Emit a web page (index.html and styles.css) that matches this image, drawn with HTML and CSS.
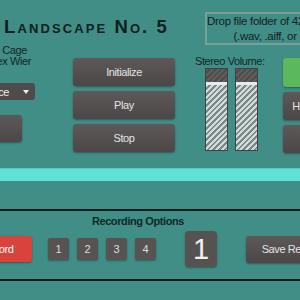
FILE: index.html
```html
<!DOCTYPE html>
<html lang="en">
<head>
    <meta charset="UTF-8">
    <meta name="viewport" content="width=device-width, initial-scale=1.0">
    <title>Imaginary Landscape No. 5</title>
    <link rel="stylesheet" href="styles.css">
</head>
<body>
    <div class="page">
        <div class="header">
            <div class="title-wrap">
                <h1 class="title"><span class="title-first">Imaginary</span> Landscape No. 5</h1>
            </div>
            <div class="drop-zone">
                Drop file folder of 42 records here<br>
                (.wav, .aiff, or .mp3)
            </div>
        </div>

        <div class="main">
            <div class="left-col">
                <div class="credits">
                    <div class="credit-cage">John Cage</div>
                    <div>realized by Alex Wier</div>
                </div>
                <div class="dropdown">
                    <span>Choose Sequence</span>
                    <span class="caret"></span>
                </div>
                <button class="btn btn-shuffle">Shuffle</button>
            </div>

            <div class="transport">
                <button class="btn">Initialize</button>
                <button class="btn">Play</button>
                <button class="btn">Stop</button>
            </div>

            <div class="volume">
                <div class="volume-label">Stereo Volume:</div>
                <div class="meters">
                    <div class="meter"><div class="meter-top"></div><div class="meter-mark"></div><div class="meter-fill"></div></div>
                    <div class="meter"><div class="meter-top"></div><div class="meter-mark"></div><div class="meter-fill"></div></div>
                </div>
            </div>

            <div class="side">
                <button class="btn btn-go">Go</button>
                <button class="btn">Hide Controls</button>
                <button class="btn">Reset</button>
            </div>
        </div>

        <div class="progress-bar"></div>

        <div class="recording">
            <div class="recording-title">Recording Options</div>
            <div class="recording-row">
                <button class="btn btn-record">Record</button>
                <div class="takes">
                    <button class="take">1</button>
                    <button class="take">2</button>
                    <button class="take">3</button>
                    <button class="take">4</button>
                </div>
                <div class="take-display">1</div>
                <button class="btn btn-save">Save Recording</button>
            </div>
        </div>
    </div>
</body>
</html>
```

FILE: styles.css
```css
body {
    margin: 0;
    background-color: #418e87;
    font-family: "Liberation Sans", Arial, sans-serif;
    font-size: 11px;
    letter-spacing: -0.4px;
    color: #102826;
    overflow: hidden;
}
.page {
    margin-left: -150px;
    width: 600px;
}
.header {
    display: flex;
    align-items: flex-start;
    padding-top: 12px;
}
.title-wrap {
    flex: none;
    width: 319px;
    display: flex;
    justify-content: flex-end;
}
.title {
    flex: none;
    margin: 4px 0 0 0;
    white-space: nowrap;
    font-family: "Liberation Sans", Arial, sans-serif;
    font-variant: small-caps;
    font-weight: bold;
    font-size: 18.5px;
    line-height: 22px;
    letter-spacing: 2.1px;
    color: #0c201f;
}
.title-first {
    margin-right: -4px;
}
.drop-zone {
    flex: none;
    margin-left: 36px;
    width: 147px;
    height: 29px;
    border: 2px solid #7a9f9b;
    text-align: center;
    font-size: 11.5px;
    letter-spacing: -0.3px;
    line-height: 15px;
    white-space: nowrap;
    color: #13201f;
}
.main {
    display: flex;
    align-items: flex-start;
}
.left-col {
    width: 185px;
    display: flex;
    flex-direction: column;
    align-items: flex-end;
}
.credits {
    text-align: right;
    line-height: 11px;
    padding-right: 4px;
}
.credit-cage {
    padding-right: 4px;
}
.dropdown {
    margin-top: 16px;
    width: 120px;
    height: 17px;
    background-color: #4f4b4b;
    border-radius: 3px;
    color: #eee;
    display: flex;
    align-items: center;
    justify-content: flex-end;
    box-sizing: border-box;
    padding-right: 6px;
}
.caret {
    margin-left: 14px;
    width: 0;
    height: 0;
    border-left: 3px solid transparent;
    border-right: 3px solid transparent;
    border-top: 4px solid #eee;
}
.btn {
    display: block;
    border: none;
    padding: 0;
    font-family: inherit;
    font-size: 11px;
    letter-spacing: -0.4px;
    color: #e4e4e4;
    background: linear-gradient(#5d5959, #4b4747);
    border-radius: 3px;
    box-shadow: 0 1px 2px rgba(0, 0, 0, 0.35);
    height: 28px;
}
.btn-shuffle {
    margin-top: 15px;
    margin-right: 13px;
    width: 80px;
    height: 27px;
}
.transport {
    margin-left: 38px;
    margin-top: 13px;
    width: 102px;
    display: flex;
    flex-direction: column;
    gap: 5px;
}
.transport .btn {
    width: 100%;
}
.volume {
    margin-left: 20px;
    margin-top: 10px;
    width: 70px;
}
.volume-label {
    line-height: 13px;
    white-space: nowrap;
}
.meters {
    display: flex;
    gap: 7px;
    margin-left: 10px;
}
.meter {
    width: 23px;
    height: 83px;
    box-sizing: border-box;
    border: 1px solid #3a4444;
    display: flex;
    flex-direction: column;
}
.meter-top {
    height: 13px;
    background: repeating-linear-gradient(135deg, #625d5d 0 2px, #514c4c 2px 4px);
}
.meter-mark {
    height: 3px;
    background-color: #e4ecec;
}
.meter-fill {
    flex: 1;
    background: repeating-linear-gradient(135deg, #d3dada 0 2px, #7b8888 2px 4px);
}
.side {
    margin-left: 18px;
    margin-top: 13px;
    width: 80px;
    display: flex;
    flex-direction: column;
    gap: 5px;
}
.btn-go {
    background: #5cb85c;
    height: 29px;
}
.progress-bar {
    margin-top: 15px;
    height: 13px;
    background-color: #5fe2d5;
    border-top: 1px solid #54c9bd;
    box-sizing: border-box;
}
.recording {
    margin-top: 28px;
    width: 576px;
    border-top: 2px solid #0c1b1b;
    border-bottom: 2px solid #0c1b1b;
    padding: 3px 0 12px 0;
}
.recording-title {
    text-align: center;
    font-weight: bold;
    line-height: 14px;
}
.recording-row {
    margin-top: 3px;
    height: 36px;
    display: flex;
    align-items: center;
    padding-left: 112px;
}
.btn-record {
    width: 70px;
    height: 26px;
    background: #d9433d;
    color: #fff;
}
.takes {
    margin-left: 16px;
    display: flex;
    gap: 8px;
}
.take {
    width: 21px;
    height: 22px;
    border: none;
    padding: 0;
    border-radius: 2px;
    background-color: #575353;
    color: #ddd;
    font-family: inherit;
    font-size: 11px;
    box-shadow: 0 1px 2px rgba(0, 0, 0, 0.3);
}
.take-display {
    margin-left: 29px;
    width: 32px;
    height: 36px;
    border-radius: 4px;
    background-color: #565252;
    color: #f0f0f0;
    font-size: 29px;
    letter-spacing: 0;
    display: flex;
    align-items: center;
    justify-content: center;
    box-shadow: 0 1px 2px rgba(0, 0, 0, 0.3);
}
.btn-save {
    margin-left: 29px;
    width: 104px;
    height: 27px;
}
```
